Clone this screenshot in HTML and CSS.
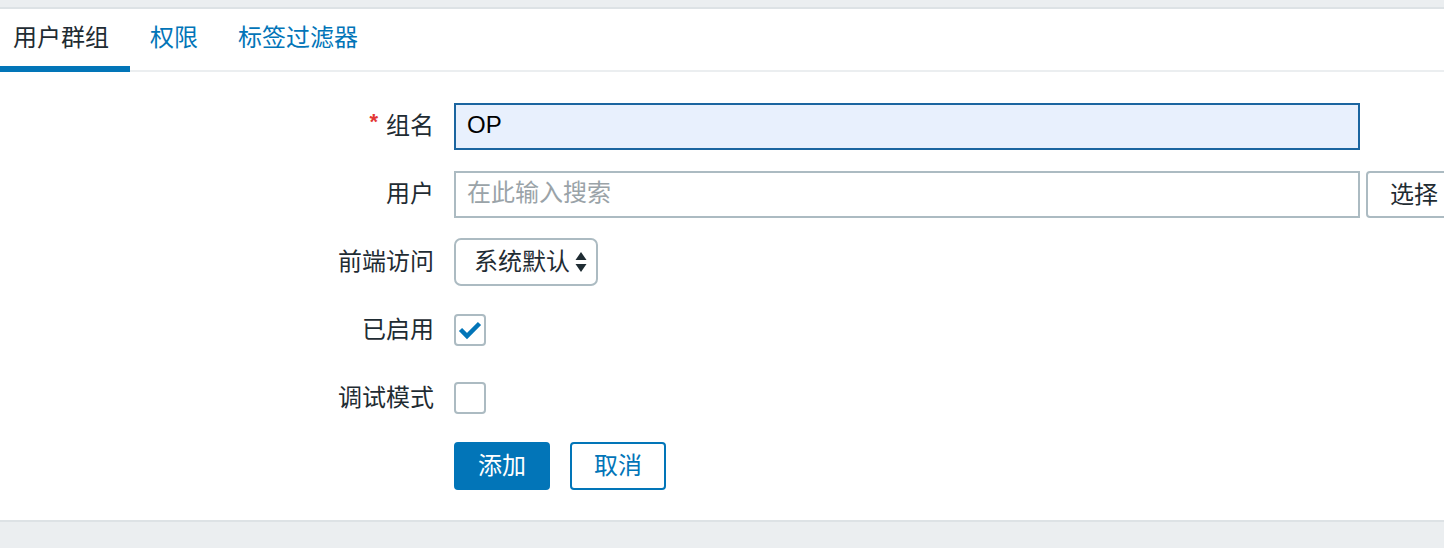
FILE: index.html
```html
<!DOCTYPE html>
<html lang="zh-CN">
<head>
    <meta charset="UTF-8">
    <title>用户群组</title>
    <link rel="stylesheet" href="styles.css">
</head>
<body>
    <div class="page">
        <ul class="tabs">
            <li class="tab active">用户群组</li>
            <li class="tab">权限</li>
            <li class="tab">标签过滤器</li>
        </ul>

        <form class="form-list">
            <label class="label"><span class="asterisk">*</span>组名</label>
            <div class="field">
                <input class="text-input focused" type="text" value="OP">
            </div>

            <label class="label">用户</label>
            <div class="field">
                <input class="text-input" type="text" placeholder="在此输入搜索">
                <button type="button" class="btn-grey">选择</button>
            </div>

            <label class="label">前端访问</label>
            <div class="field">
                <div class="select">
                    <span>系统默认</span>
                    <svg class="arrows" width="12" height="24" viewBox="0 0 12 24">
                        <path d="M6 2 L11.5 10 L0.5 10 Z" fill="#1f2c33"/>
                        <path d="M6 22 L11.5 14 L0.5 14 Z" fill="#1f2c33"/>
                    </svg>
                </div>
            </div>

            <label class="label">已启用</label>
            <div class="field">
                <span class="checkbox">
                    <svg width="24" height="20" viewBox="0 0 24 20">
                        <path d="M2.5 9.5 L9 16 L21.5 3.5" fill="none" stroke="#0275b8" stroke-width="4.5"/>
                    </svg>
                </span>
            </div>

            <label class="label">调试模式</label>
            <div class="field">
                <span class="checkbox"></span>
            </div>

            <div></div>
            <div class="field buttons">
                <button type="button" class="btn-main">添加</button>
                <button type="button" class="btn-alt">取消</button>
            </div>
        </form>
    </div>
</body>
</html>
```

FILE: styles.css
```css
html, body {
    margin: 0;
    height: 100%;
    overflow: hidden;
}
body {
    background-color: #ebeef0;
    font-family: "Liberation Sans", "Noto Sans CJK SC", sans-serif;
    font-size: 24px;
    color: #1f2c33;
    padding-top: 7px;
}
.page {
    background-color: #fff;
    border-top: 2px solid #dde2e5;
    border-bottom: 2px solid #dde2e5;
    padding-top: 1px;
    overflow: hidden;
}
.tabs {
    display: flex;
    margin: 0;
    padding: 0;
    list-style: none;
    border-bottom: 2px solid #ebeef0;
}
.tab {
    height: 56px;
    line-height: 56px;
    padding: 0 20px;
    margin-bottom: -2px;
    border-bottom: 6px solid transparent;
    color: #0275b8;
}
.tab:first-child {
    padding-left: 13px;
    padding-right: 21px;
}
.tab.active {
    color: #1f2c33;
    border-bottom-color: #0275b8;
}
.form-list {
    display: grid;
    grid-template-columns: 434px 1fr;
    grid-auto-rows: 48px;
    column-gap: 20px;
    row-gap: 20px;
    padding: 30px 0;
    margin: 0;
}
.label {
    display: flex;
    align-items: center;
    justify-content: flex-end;
    padding-bottom: 5px;
}
.asterisk {
    color: #e33734;
    font-size: 22px;
    font-weight: bold;
    margin-right: 8px;
    position: relative;
    top: -2px;
}
.field {
    display: flex;
    align-items: center;
    gap: 6px;
}
.text-input {
    box-sizing: border-box;
    width: 906px;
    height: 47px;
    flex-shrink: 0;
    padding: 0 11px 2px;
    border: 2px solid #acbbc2;
    font-family: inherit;
    font-size: 24px;
    color: #000;
    outline: none;
}
.text-input::placeholder {
    color: #9aa3a8;
}
.text-input.focused {
    border-color: #1b65a0;
    background-color: #e8f0fd;
}
.btn-grey {
    box-sizing: border-box;
    height: 47px;
    width: 100px;
    flex-shrink: 0;
    padding: 0 22px 3px;
    text-align: left;
    border: 2px solid #acbbc2;
    border-radius: 4px;
    background-color: #fff;
    font-family: inherit;
    font-size: 24px;
    color: #1f2c33;
}
.select {
    box-sizing: border-box;
    width: 144px;
    height: 48px;
    display: flex;
    align-items: center;
    justify-content: space-between;
    padding: 0 9px 0 18px;
    border: 2px solid #acbbc2;
    border-radius: 7px;
}
.select span {
    padding-bottom: 5px;
}
.checkbox {
    box-sizing: border-box;
    width: 32px;
    height: 32px;
    border: 2px solid #acbbc2;
    border-radius: 4px;
    display: flex;
    align-items: center;
    justify-content: center;
}
.buttons {
    gap: 20px;
}
.btn-main, .btn-alt {
    box-sizing: border-box;
    width: 96px;
    height: 48px;
    border-radius: 4px;
    font-family: inherit;
    font-size: 24px;
    padding: 0 0 5px;
}
.btn-main {
    background-color: #0275b8;
    border: 2px solid #0275b8;
    color: #fff;
}
.btn-alt {
    background-color: #fff;
    border: 2px solid #0275b8;
    color: #0275b8;
}
```
